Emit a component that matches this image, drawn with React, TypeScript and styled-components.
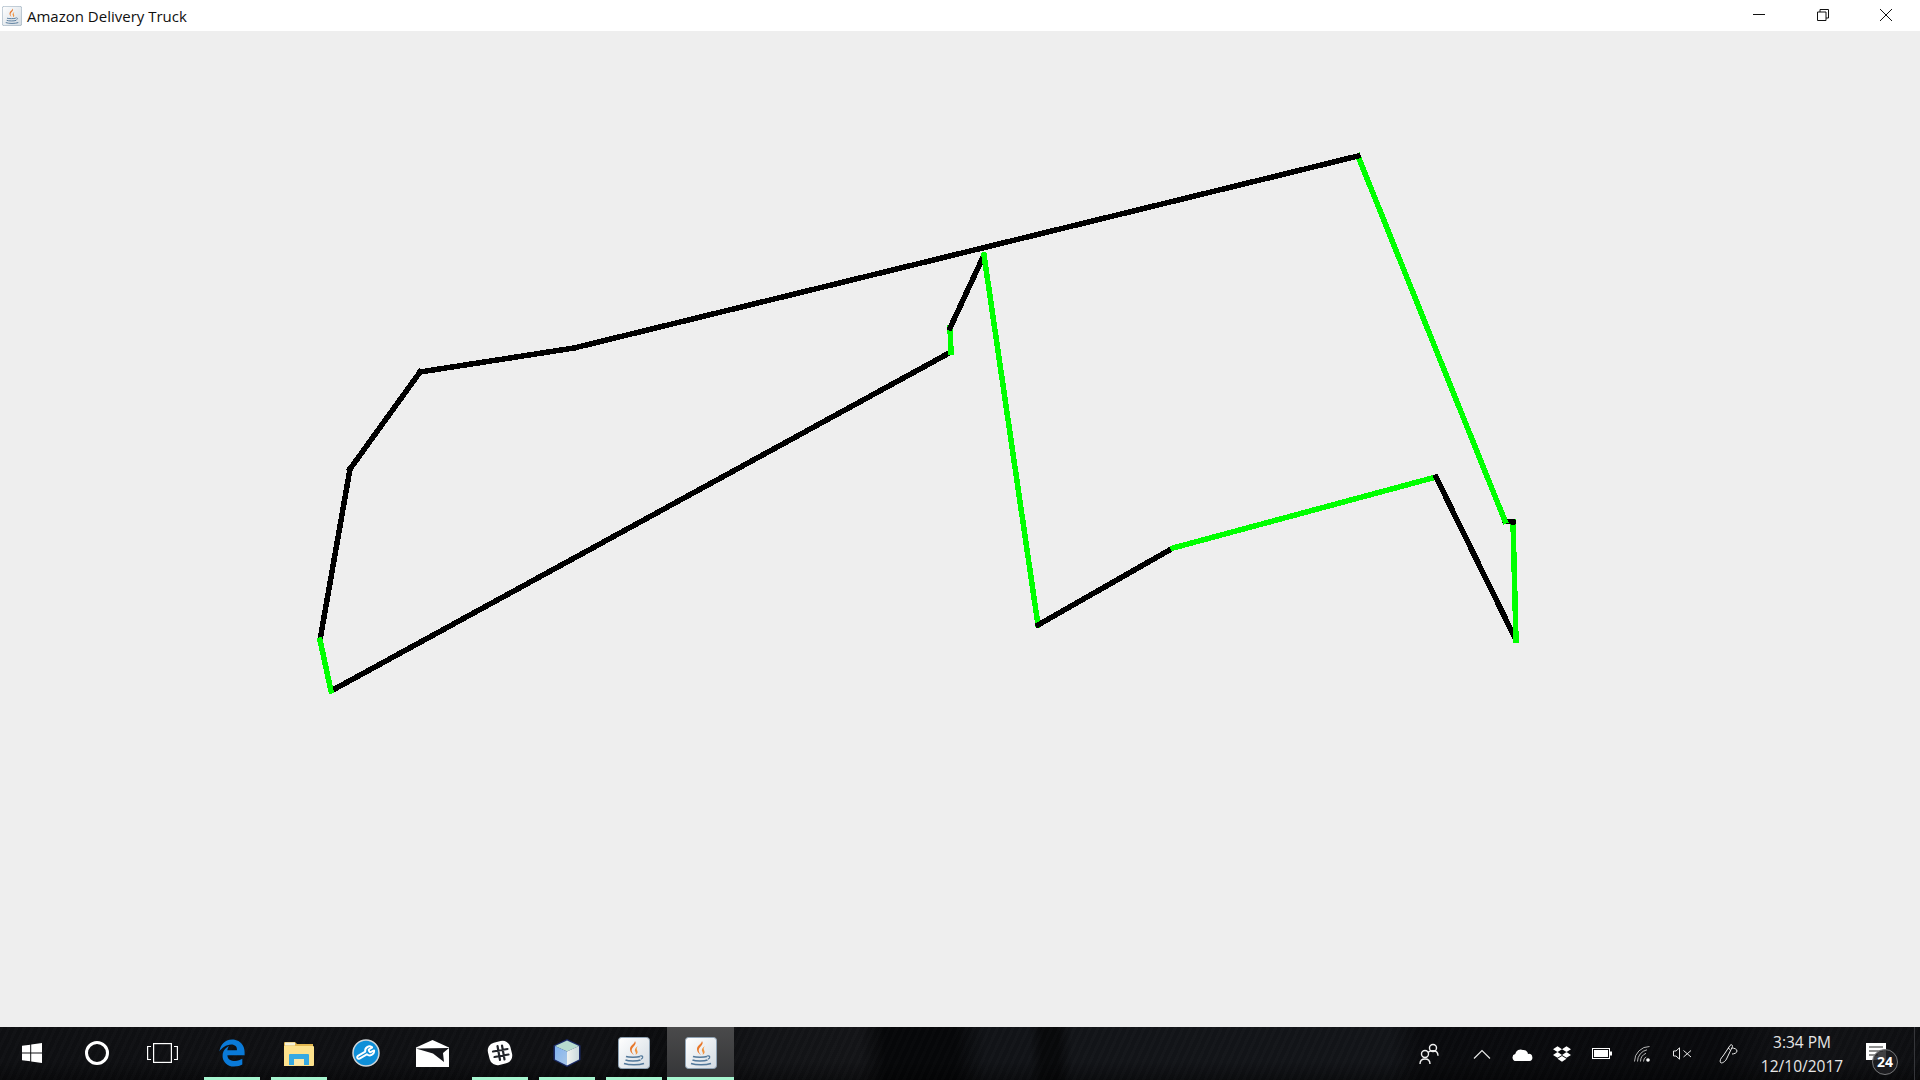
import React from 'react';
import styled, { createGlobalStyle } from 'styled-components';
import { FaDropbox, FaEdgeLegacy } from 'react-icons/fa';
import { Wrench } from 'lucide-react';

const GlobalStyle = createGlobalStyle`
  html, body {
    margin: 0;
    height: 100%;
    overflow: hidden;
    background: #eeeeee;
    font-family: "Open Sans", "Noto Sans", "Liberation Sans", sans-serif;
  }
`;

const Window = styled.div`
  display: flex;
  flex-direction: column;
  height: 100vh;
`;

const TitleBar = styled.div`
  display: flex;
  align-items: center;
  height: 31px;
  flex: none;
  background: #ffffff;
  padding: 0 2px 0 2px;
`;

const TitleText = styled.div`
  margin-left: 5px;
  font-size: 15px;
  color: #101010;
`;

const CaptionButtons = styled.div`
  display: flex;
  margin-left: auto;
`;

const CaptionButton = styled.div`
  width: 63.5px;
  height: 31px;
  padding-bottom: 1px;
  box-sizing: border-box;
  display: flex;
  align-items: center;
  justify-content: center;
`;

const Canvas = styled.svg`
  display: block;
  flex: 1;
  width: 100%;
  min-height: 0;
  background: #eeeeee;
`;

const Taskbar = styled.div`
  display: flex;
  align-items: stretch;
  height: 53px;
  flex: none;
  color: #ffffff;
  background:
    repeating-linear-gradient(115deg, rgba(255, 255, 255, 0.012) 0 3px, rgba(0, 0, 0, 0.05) 3px 7px),
    linear-gradient(180deg, rgba(0, 0, 0, 0) 65%, rgba(0, 0, 0, 0.4) 100%),
    linear-gradient(90deg, #0f1013 0, #101114 600px, #0b0c0e 680px, #131417 760px, #141518 860px, #060709 885px, #060709 955px, #121418 985px, #121418 1030px, #08090b 1042px, #08090b 1058px, #131519 1072px, #131519 1390px, #0a0b0e 1420px, #090a0d 1720px, #121316 1800px, #0e0f12 1920px);
`;

const SystemButton = styled.div<{ $width: number; $shift?: number }>`
  width: ${(p) => p.$width}px;
  flex: none;
  display: flex;
  align-items: center;
  justify-content: center;
  padding-bottom: 1px;
  padding-right: ${(p) => p.$shift ?? 0}px;
  box-sizing: border-box;
`;

const AppButton = styled.div<{ $open?: boolean; $active?: boolean }>`
  position: relative;
  width: 67px;
  flex: none;
  display: flex;
  align-items: center;
  justify-content: center;
  padding-bottom: 1px;
  box-sizing: border-box;
  background: ${(p) => (p.$active ? 'linear-gradient(180deg, #4a4a4b, #343537)' : 'transparent')};

  &::after {
    content: '';
    display: ${(p) => (p.$open ? 'block' : 'none')};
    position: absolute;
    bottom: 0;
    height: 3px;
    left: ${(p) => (p.$active ? '0' : '6px')};
    right: ${(p) => (p.$active ? '0' : '5px')};
    background: #a6f5cf;
  }
`;

const Tray = styled.div`
  display: flex;
  align-items: stretch;
  margin-left: auto;
  padding-right: 19px;
`;

const TrayIcon = styled.div<{ $gap?: number }>`
  width: 40px;
  flex: none;
  margin-right: ${(p) => p.$gap ?? 0}px;
  display: flex;
  align-items: center;
  justify-content: center;
`;

const Clock = styled.div`
  width: 106px;
  flex: none;
  display: flex;
  flex-direction: column;
  align-items: center;
  justify-content: center;
  font-size: 15.5px;
  line-height: 24px;
  color: #e6e6e6;
`;

const Notification = styled.div`
  position: relative;
  width: 46px;
  flex: none;
`;

const NotificationBadge = styled.div`
  position: absolute;
  left: 17px;
  top: 22px;
  width: 26px;
  height: 26px;
  box-sizing: border-box;
  border-radius: 50%;
  border: 1px solid #77787a;
  background: rgba(30, 31, 34, 0.85);
  color: #ffffff;
  font-size: 14px;
  font-weight: 700;
  line-height: 24px;
  text-align: center;
`;

const ShowDesktop = styled.div`
  position: absolute;
  right: 5px;
  bottom: 0;
  width: 1px;
  height: 53px;
  background: #35363a;
`;

const ActionCenter = styled.svg`
  position: absolute;
  left: 11px;
  top: 16px;
`;

const points: [number, number, string][] = [
  [331, 691, 'k'],
  [951, 352, 'g'],
  [950, 328, 'k'],
  [984, 255, 'g'],
  [1038, 625, 'k'],
  [1173, 548, 'g'],
  [1436, 477, 'k'],
  [1516, 640, 'g'],
  [1513, 522, 'k'],
  [1505, 521, 'g'],
  [1358, 156, 'k'],
  [574, 348, 'k'],
  [420, 372, 'k'],
  [350, 469, 'k'],
  [320, 640, 'g'],
  [331, 691, 'k'],
];

const JavaIcon = ({ size }: { size: number }) => (
  <svg width={size} height={size} viewBox="0 0 32 32">
    <defs>
      <linearGradient id={`tile${size}`} x1="0" y1="0" x2="1" y2="1">
        <stop offset="0" stopColor="#ffffff" />
        <stop offset="1" stopColor="#d3dbe2" />
      </linearGradient>
    </defs>
    <rect x="0.5" y="0.5" width="31" height="31" rx="3" fill={`url(#tile${size})`} stroke="#8fa3b5" />
    <path d="M17 4c3 4-5 6-3 11 .6 1.4 1.5 2.4 2 3-3-2-5-5-3.5-8C13.800 7.500 16.500 7 17 4z" fill="#e8772a" />
    <path d="M20 9c-3 2-4 4-2.500 6 .5.8.6 1.800 0 3 2.500-1.500 2.500-3 1.500-5-.7-1.500-.2-2.600 1-4z" fill="#ef9440" />
    <path d="M8 19.500c3 1 11 1 14 0M7.500 23c3 1.200 12 1.200 15 0M6 26.500c5 1.800 15 1.800 20 0" fill="none" stroke="#52789a" strokeWidth="1.500" />
    <path d="M22 19c3-.8 4 1.800 1 3.200" fill="none" stroke="#52789a" strokeWidth="1.200" />
  </svg>
);

const WindowsLogo = () => (
  <svg width="20" height="20" viewBox="0 0 20 20" fill="#fff">
    <path d="M0 2.800 8.200 1.700V9.500H0zM9.200 1.500 20 0V9.500H9.200zM0 10.500H8.200V18.300L0 17.200zM9.200 10.500H20V20L9.200 18.500z" />
  </svg>
);

const TaskView = () => (
  <svg width="31" height="20" viewBox="0 0 31 20" fill="none" stroke="#fff" strokeWidth="1.200">
    <rect x="6.600" y="0.600" width="17.800" height="18.800" />
    <path d="M4 3.500H.6V16.500H4M27 3.500h3.400V16.500H27" />
  </svg>
);

const Folder = () => (
  <svg width="30" height="25" viewBox="0 0 30 25">
    <path d="M0 2a1 1 0 0 1 1-1h10l2 2h16v21H0z" fill="#e3b850" />
    <rect x="1" y="1.500" width="10" height="3" fill="#f5f2d8" />
    <path d="M0 5h29a1 1 0 0 1 1 1v18a1 1 0 0 1-1 1H0z" fill="#fde28c" />
    <path d="M5 24V14a1 1 0 0 1 1-1h18a1 1 0 0 1 1 1v10h-5v-6H10v6z" fill="#36aae2" />
    <rect x="10" y="18" width="10" height="6" fill="#fbe9a8" />
  </svg>
);

const ToolsIcon = () => (
  <svg width="28" height="28" viewBox="0 0 28 28">
    <circle cx="14" cy="14" r="13" fill="#0f8fd8" stroke="#cfd6da" strokeWidth="1.500" />
    <g transform="rotate(15 14 14) translate(5 5)">
      <Wrench size={18} color="#ffffff" strokeWidth={2.600} />
    </g>
  </svg>
);

const MailIcon = () => (
  <svg width="33" height="27" viewBox="0 0 33 27">
    <path d="M0 7.500 16.500 0 33 7.500V27H0z" fill="#fff" />
    <path d="M0 8.500 33 8 27 13 28 22 17 13.500z" fill="#15161a" />
  </svg>
);

const SlackIcon = () => (
  <svg width="26" height="26" viewBox="0 0 26 26">
    <rect x="1.500" y="1.500" width="23" height="23" rx="8" transform="rotate(-14 13 13)" fill="#fff" />
    <path d="M10.500 6 13 20M15 5.500 17.500 19.500M6 11.500 20.500 9M7.500 17 21.500 14.500" stroke="#22242a" strokeWidth="2.200" fill="none" strokeLinecap="round" />
  </svg>
);

const CubeIcon = () => (
  <svg width="30" height="30" viewBox="0 0 30 30">
    <defs>
      <linearGradient id="cubeLeft" x1="0" y1="0" x2="1" y2="1">
        <stop offset="0" stopColor="#7fb2f0" />
        <stop offset="1" stopColor="#a9c6e6" />
      </linearGradient>
      <linearGradient id="cubeRight" x1="0" y1="0" x2="1" y2="0">
        <stop offset="0" stopColor="#f0f3f0" />
        <stop offset="1" stopColor="#c9d8dc" />
      </linearGradient>
    </defs>
    <path d="M15 1 28.500 7.500V22L15 29 1.500 22V7.500z" fill="#1b2a66" />
    <path d="M15 2.500 27 8 15 13.500 3 8z" fill="#b7dccf" />
    <path d="M3 8 15 13.500V27.500L3 21.500z" fill="url(#cubeLeft)" />
    <path d="M27 8 15 13.500V27.500L27 21.500z" fill="url(#cubeRight)" />
  </svg>
);

const PeopleIcon = () => (
  <svg width="20" height="22" viewBox="0 0 20 22" fill="none" stroke="#f2f2f2" strokeWidth="1.400">
    <circle cx="14" cy="5" r="3.500" />
    <circle cx="6" cy="11" r="3.500" />
    <path d="M1 21c0-3 2-5 5-5s5 2 5 5M9 9.500c1-1.200 2.800-1.700 5-1.700 3 0 5 2 5 5" />
  </svg>
);

const Chevron = () => (
  <svg width="18" height="10" viewBox="0 0 18 10" fill="none" stroke="#e8e8e8" strokeWidth="1.200">
    <path d="M1 9.500 9 1.500 17 9.500" />
  </svg>
);

const CloudIcon = () => (
  <svg width="21" height="14" viewBox="0 0 21 14" fill="#fff">
    <path d="M4 14a3.500 3.500 0 0 1-.8-6.900A5.500 5.500 0 0 1 11 3a4.500 4.500 0 0 1 5 4 3.500 3.500 0 0 1 1.500 7z" />
  </svg>
);

const BatteryIcon = () => (
  <svg width="20" height="11" viewBox="0 0 20 11">
    <rect x="0.500" y="0.500" width="17" height="10" fill="none" stroke="#fff" />
    <rect x="2" y="2" width="14" height="7" fill="#fff" />
    <rect x="18" y="3.500" width="2" height="4" fill="#fff" />
  </svg>
);

const WifiIcon = () => (
  <svg width="16" height="16" viewBox="0 0 16 16" fill="none" stroke="#c9c9c9" strokeWidth="0.900">
    <path d="M0.500 15.500A15 15 0 0 1 15.500 0.500M3.500 15.500A12 12 0 0 1 13 3.800M6.500 15.500A9 9 0 0 1 12 7.300M9.500 15.500A6 6 0 0 1 12 10.800" />
    <circle cx="14" cy="14" r="1.800" fill="#fff" stroke="none" />
  </svg>
);

const SpeakerIcon = () => (
  <svg width="19" height="13" viewBox="0 0 19 13" fill="none" stroke="#e8e8e8" strokeWidth="1">
    <path d="M.5 4H3L6.500.8V12.200L3 9H.5z" />
    <path d="M10.500 3.500 18 10M18 3.500 10.500 10" />
  </svg>
);

const PenIcon = () => (
  <svg width="20" height="22" viewBox="0 0 20 22" fill="none" stroke="#ececec" strokeWidth="1">
    <path d="M4 13 11 2.500c1-1.500 3-.5 2.500 1L7.500 16c-1 2.500-5 5-6 3.500-1-1.500 0-4 2.500-6.500z" />
    <path d="M13 5c2 0 5 1 5 3s-3 3-5 3M9 5l2 1.500" />
  </svg>
);

const App: React.FC = () => (
  <Window>
    <GlobalStyle />
    <TitleBar>
      <JavaIcon size={20} />
      <TitleText>Amazon Delivery Truck</TitleText>
      <CaptionButtons>
        <CaptionButton>
          <svg width="12" height="12" viewBox="0 0 12 12" stroke="#111" fill="none">
            <path d="M0 5.500H12" />
          </svg>
        </CaptionButton>
        <CaptionButton>
          <svg width="12" height="12" viewBox="0 0 12 12" stroke="#111" fill="none">
            <path d="M.5 3H9V11.500H.5zM3 3V.5H11.500V9H9" />
          </svg>
        </CaptionButton>
        <CaptionButton>
          <svg width="12" height="12" viewBox="0 0 12 12" stroke="#111" fill="none">
            <path d="M0 0 12 12M12 0 0 12" />
          </svg>
        </CaptionButton>
      </CaptionButtons>
    </TitleBar>

    <Canvas viewBox="0 31 1920 996" shapeRendering="crispEdges">
      {points.slice(0, -1).map(([x, y, c], i) => (
        <line
          key={i}
          x1={x}
          y1={y}
          x2={points[i + 1][0]}
          y2={points[i + 1][1]}
          stroke={c === 'g' ? '#00ff00' : '#000000'}
          strokeWidth={5.5}
          strokeLinecap="square"
        />
      ))}
    </Canvas>

    <Taskbar>
      <SystemButton $width={64}>
        <WindowsLogo />
      </SystemButton>
      <SystemButton $width={66}>
        <svg width="24" height="24" viewBox="0 0 24 24">
          <circle cx="12" cy="12" r="10.500" fill="none" stroke="#fff" strokeWidth="3" />
        </svg>
      </SystemButton>
      <SystemButton $width={68} $shift={4}>
        <TaskView />
      </SystemButton>
      <AppButton $open>
        <FaEdgeLegacy size={28} color="#0a7ad8" />
      </AppButton>
      <AppButton $open>
        <Folder />
      </AppButton>
      <AppButton>
        <ToolsIcon />
      </AppButton>
      <AppButton>
        <MailIcon />
      </AppButton>
      <AppButton $open>
        <SlackIcon />
      </AppButton>
      <AppButton $open>
        <CubeIcon />
      </AppButton>
      <AppButton $open>
        <JavaIcon size={32} />
      </AppButton>
      <AppButton $open $active>
        <JavaIcon size={32} />
      </AppButton>

      <Tray>
        <TrayIcon $gap={13}>
          <PeopleIcon />
        </TrayIcon>
        <TrayIcon>
          <Chevron />
        </TrayIcon>
        <TrayIcon>
          <CloudIcon />
        </TrayIcon>
        <TrayIcon>
          <FaDropbox size={18} color="#ffffff" />
        </TrayIcon>
        <TrayIcon>
          <BatteryIcon />
        </TrayIcon>
        <TrayIcon>
          <WifiIcon />
        </TrayIcon>
        <TrayIcon $gap={7}>
          <SpeakerIcon />
        </TrayIcon>
        <TrayIcon>
          <PenIcon />
        </TrayIcon>
        <Clock>
          <div>3:34 PM</div>
          <div>12/10/2017</div>
        </Clock>
        <Notification>
          <ActionCenter width="20" height="17" viewBox="0 0 20 17">
            <rect width="20" height="17" fill="#fff" />
            <path d="M3 4H17M3 8H17M3 12H12" stroke="#222" strokeWidth="1.200" />
          </ActionCenter>
          <NotificationBadge>24</NotificationBadge>
        </Notification>
        <ShowDesktop />
      </Tray>
    </Taskbar>
  </Window>
);

export default App;
